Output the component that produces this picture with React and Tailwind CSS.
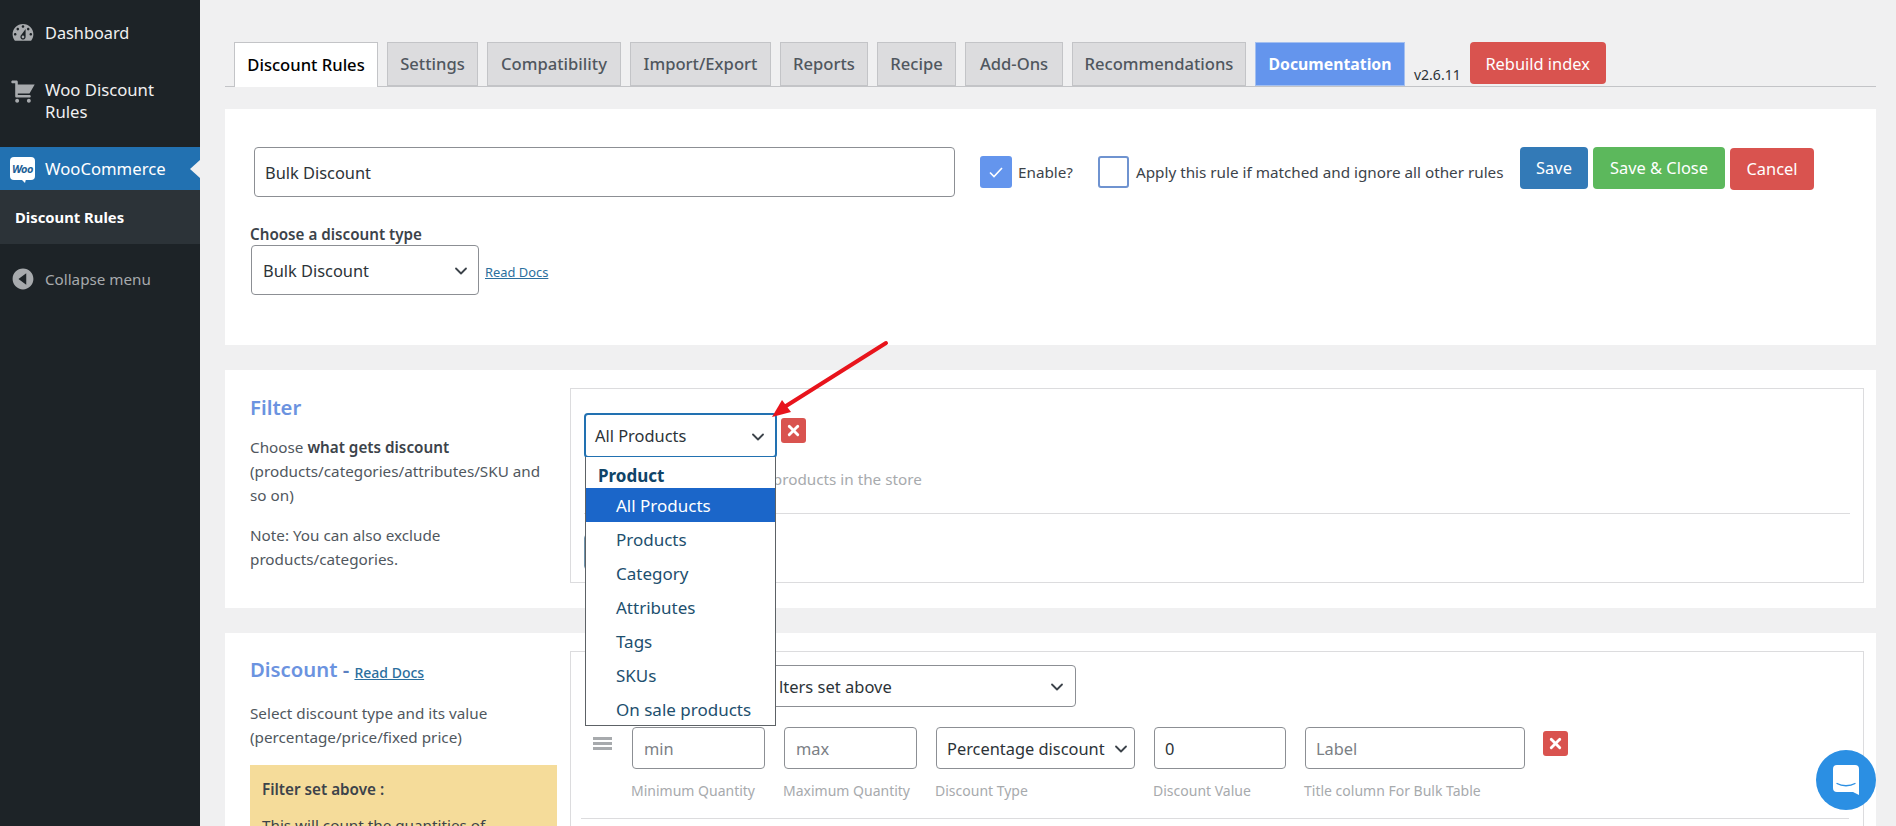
import { ChevronDown, X } from "lucide-react";

const FONT = "[font-family:'Noto_Sans',sans-serif]";

const TABS = [
  { label: "Settings", w: "w-[91px]" },
  { label: "Compatibility", w: "w-[134px]" },
  { label: "Import/Export", w: "w-[141px]" },
  { label: "Reports", w: "w-[88px]" },
  { label: "Recipe", w: "w-[79px]" },
  { label: "Add-Ons", w: "w-[98px]" },
  { label: "Recommendations", w: "w-[174px]" },
];

const OPTIONS = ["Products", "Category", "Attributes", "Tags", "SKUs", "On sale products"];

function DashIcon({ d, className }) {
  return (
    <svg viewBox="0 0 20 20" className={className} fill="currentColor">
      <path fillRule="evenodd" d={d} />
    </svg>
  );
}

function Sidebar() {
  return (
    <aside className="w-[200px] shrink-0 bg-[#1d2327] text-[#f0f0f1] text-[16.7px] leading-[22px]">
      <div className="flex items-center h-[65px]">
        <DashIcon
          className="w-[26px] h-[26px] ml-[10px] mr-[9px] text-[#a7aaad]"
          d="M3.76 16h12.48c1.1-1.37 1.76-3.11 1.76-5 0-4.42-3.58-8-8-8s-8 3.58-8 8c0 1.89.66 3.63 1.76 5zM10 4c.55 0 1 .45 1 1s-.45 1-1 1-1-.45-1-1 .45-1 1-1zM6 6c.55 0 1 .45 1 1s-.45 1-1 1-1-.45-1-1 .45-1 1-1zm8 0c.55 0 1 .45 1 1s-.45 1-1 1-1-.45-1-1 .45-1 1-1zm-5.37 5.55L12 7v6c0 1.1-.9 2-2 2s-2-.9-2-2c0-.57.24-1.08.63-1.45zM4 10c.55 0 1 .45 1 1s-.45 1-1 1-1-.45-1-1 .45-1 1-1zm12 0c.55 0 1 .45 1 1s-.45 1-1 1-1-.45-1-1 .45-1 1-1zm-5 3c0-.55-.45-1-1-1s-1 .45-1 1 .45 1 1 1 1-.45 1-1z"
        />
        <span className="text-[16.3px]">Dashboard</span>
      </div>
      <div className="flex h-[82px] pt-[13px]">
        <DashIcon
          className="w-[26px] h-[26px] ml-[10px] mr-[9px] text-[#a7aaad]"
          d="M6 13h9c.55 0 1 .45 1 1s-.45 1-1 1H5c-.55 0-1-.45-1-1V4H2c-.55 0-1-.45-1-1s.45-1 1-1h3c.55 0 1 .45 1 1v2h13l-4 7H6v1zm-.5 3c.83 0 1.5.67 1.5 1.5S6.33 19 5.5 19 4 18.33 4 17.5 4.67 16 5.5 16zm9 0c.83 0 1.5.67 1.5 1.5s-.67 1.5-1.5 1.5-1.5-.67-1.5-1.5.67-1.5 1.5-1.5z"
        />
        <span className="pt-[1px]">Woo Discount<br />Rules</span>
      </div>
      <div className="relative flex items-center h-[43px] bg-[#2271b1] text-white">
        <div className="relative ml-[10px] mr-[10px] w-[25px] h-[23px] rounded-[4px] bg-white flex items-center justify-center">
          <span className="text-[11px] leading-none font-bold italic text-[#1f5f96] tracking-[-0.5px]">Woo</span>
          <span className="absolute -bottom-[3px] left-[11px] w-0 h-0 border-l-[4px] border-r-[1px] border-t-[4px] border-l-transparent border-r-transparent border-t-white" />
        </div>
        <span>WooCommerce</span>
        <span className="absolute right-0 top-[13px] w-0 h-0 border-y-[9px] border-r-[10px] border-y-transparent border-r-[#f0f0f1]" />
      </div>
      <div className="h-[54px] bg-[#2c3338] pl-[15px] pt-[16px] text-[14.8px] leading-[22px] font-bold text-white">
        Discount Rules
      </div>
      <div className="flex items-center h-[70px] text-[#a7aaad] text-[15.2px]">
        <DashIcon
          className="w-[26px] h-[26px] ml-[10px] mr-[9px] text-[#a7aaad]"
          d="M10 2c4.42 0 8 3.58 8 8s-3.58 8-8 8-8-3.58-8-8 3.58-8 8-8zm2.5 3.5L6.5 10l6 4.5v-9z"
        />
        <span>Collapse menu</span>
      </div>
    </aside>
  );
}

function Field({ children, className = "" }) {
  return (
    <div className={`flex items-center pt-[2px] rounded-[4px] border border-[#8c8f94] bg-white text-[#2c3338] ${className}`}>
      {children}
    </div>
  );
}

function Chevron() {
  return <ChevronDown className="w-[20px] h-[20px] text-[#3c434a]" strokeWidth={2.2} />;
}

function RedX({ className = "" }) {
  return (
    <div className={`w-[25px] h-[25px] rounded-[3px] bg-[#d9534f] flex items-center justify-center text-white ${className}`}>
      <X className="w-[17px] h-[17px]" strokeWidth={4} />
    </div>
  );
}

function FilterMenu() {
  return (
    <div className="absolute left-[1px] top-[44px] w-[191px] h-[269px] z-10 bg-white border border-[#5d6266] border-t-0 text-[17px] text-[#1d4f6e]">
      <div className="h-[31px] pl-[12px] pt-[7px] font-bold leading-[24px] text-[#0f4468]">Product</div>
      <div className="h-[34px] pl-[30px] pt-[1px] flex items-center bg-[#1b66c9] text-white">All Products</div>
      {OPTIONS.map((o) => (
        <div key={o} className="h-[34px] pl-[30px] pt-[1px] flex items-center">{o}</div>
      ))}
    </div>
  );
}

function QtyCol({ label, width, children }) {
  return (
    <div className={`${width} shrink-0`}>
      {children}
      <div className="mt-[12px] -ml-[1px] text-[14px] leading-[20px] text-[#a7aaad] whitespace-nowrap">{label}</div>
    </div>
  );
}

export default function App() {
  return (
    <div className={`flex h-screen overflow-hidden bg-[#f0f0f1] ${FONT}`}>
      <Sidebar />
      <main className="relative flex-1 pl-[25px] pr-[20px] pt-[42px] min-w-0">
        {/* tabs */}
        <div className="flex items-start h-[45px] pl-[9px] gap-[9px] border-b border-[#c3c4c7] text-[16.6px] font-medium">
          <div className="w-[144px] h-[45px] pt-[1px] flex items-center justify-center bg-white border border-[#c3c4c7] border-b-0 text-black">
            Discount Rules
          </div>
          {TABS.map((t) => (
            <div key={t.label} className={`${t.w} h-[44px] pt-[1px] flex items-center justify-center bg-[#dcdcde] border border-[#c3c4c7] text-[#50575e]`}>
              {t.label}
            </div>
          ))}
          <div className="w-[150px] h-[44px] pt-[1px] flex items-center justify-center bg-[#6495ed] border border-[#a3bff0] text-white text-[15.8px] font-bold">
            Documentation
          </div>
          <span className="self-end mb-[1px] text-[14px] text-[#2c3338] font-normal">v2.6.11</span>
          <div className="w-[136px] h-[42px] pt-[2px] flex items-center justify-center rounded-[4px] bg-[#d9534f] text-white text-[16.4px] font-normal">
            Rebuild index
          </div>
        </div>

        {/* title card */}
        <section className="h-[236px] mt-[22px] bg-white pl-[29px] pt-[38px]">
          <div className="flex items-start">
            <Field className="w-[701px] h-[50px] pl-[10px] text-[16.4px] mr-[25px]">Bulk Discount</Field>
            <div className="flex items-center mt-[9px] text-[15.25px] text-[#3c434a]">
              <div className="w-[32px] h-[32px] rounded-[3px] bg-[#6495ed] flex items-center justify-center mr-[6px]">
                <svg viewBox="0 0 20 20" className="w-[20px] h-[20px]" fill="none" stroke="white" strokeWidth="1.6">
                  <path d="M4 10.5l4 4 8-8.5" />
                </svg>
              </div>
              <span className="w-[80px] pt-[1px]">Enable?</span>
              <div className="w-[31px] h-[32px] rounded-[3px] border-2 border-[#6f93d0] mr-[7px]" />
              <span className="whitespace-nowrap pt-[1px]">Apply this rule if matched and ignore all other rules</span>
            </div>
            <div className="ml-auto mr-[62px] flex items-start gap-[5px] text-[16.4px] text-white">
              <div className="w-[68px] h-[42px] pt-[1px] rounded-[4px] bg-[#337ab7] flex items-center justify-center">Save</div>
              <div className="w-[132px] h-[42px] pt-[1px] rounded-[4px] bg-[#5cb85c] flex items-center justify-center">Save &amp; Close</div>
              <div className="w-[84px] h-[42px] pt-[1px] mt-[1px] rounded-[4px] bg-[#d9534f] flex items-center justify-center">Cancel</div>
            </div>
          </div>
          <div className="mt-[26px] -ml-[4px] text-[15.2px] leading-[22px] font-semibold text-[#3c434a]">Choose a discount type</div>
          <div className="flex items-center -ml-[3px]">
            <Field className="w-[228px] h-[50px] pl-[11px] pr-[7px] justify-between text-[16.4px]">
              Bulk Discount
              <Chevron />
            </Field>
            <a className="ml-[6px] mt-[5px] text-[12.9px] underline text-[#2b6f9e]">Read Docs</a>
          </div>
        </section>

        {/* filter card */}
        <section className="flex h-[238px] mt-[25px] bg-white">
          <div className="w-[345px] shrink-0 pl-[25px] pr-[10px] pt-[21px] text-[15.25px] leading-[24px] text-[#50575e]">
            <h2 className="text-[20.3px] leading-[32px] font-semibold text-[#6b93e0] mb-[12px]">Filter</h2>
            <p>Choose <b className="font-semibold text-[#3c434a]">what gets discount</b><br />(products/categories/attributes/SKU and so on)</p>
            <p className="mt-[16px]">Note: You can also exclude products/categories.</p>
          </div>
          <div className="relative w-[1294px] h-[195px] mt-[18px] border border-[#dcdcde] px-[13px]">
            <div className="relative flex items-start mt-[24px]">
              <div className="w-[193px] h-[45px] pl-[9px] pr-[7px] pt-[2px] flex items-center justify-between rounded-[4px] border-2 border-[#2271b1] bg-white text-[16.4px] text-[#2c3338]">
                All Products
                <Chevron />
              </div>
              <RedX className="ml-[4px] mt-[5px]" />
              <FilterMenu />
            </div>
            <p className="mt-[10px] text-[15.25px] text-[#a7aaad]">Discount applies to all the products in the store</p>
            <div className="mt-[22px] border-t border-[#dcdcde]" />
            <div className="mt-[20px] w-[120px] h-[36px] rounded-[4px] border border-[#6f94ad]" />
          </div>
        </section>

        {/* discount card */}
        <section className="relative flex h-[300px] mt-[25px] bg-white">
          <div className="w-[345px] shrink-0 pl-[25px] pr-[0px] pt-[20px] text-[15.25px] leading-[24.3px] text-[#50575e]">
            <h2 className="text-[20.3px] leading-[32px] font-semibold text-[#6b93e0] mb-[13px]">
              Discount <span className="text-[#5b7fc0]">-</span>{" "}
              <a className="relative top-[1px] text-[14px] font-medium underline text-[#2b6f9e]">Read Docs</a>
            </h2>
            <p>Select discount type and its value<br />(percentage/price/fixed price)</p>
            <div className="mt-[15px] w-[307px] h-[200px] bg-[#f5dc9a] px-[12px] pt-[12px] text-[#3c434a]">
              <b className="font-semibold">Filter set above :</b>
              <p className="mt-[12px]">This will count the quantities of</p>
            </div>
          </div>
          <div className="w-[1294px] h-[300px] mt-[18px] border border-[#dcdcde] pl-[10px] pt-[13px]">
            <Field className="ml-[30px] w-[465px] h-[42px] pr-[8px] justify-between text-[16.5px]">
              <span className="pl-[167px]">lters set above</span>
              <Chevron />
            </Field>
            <div className="flex items-start mt-[20px]">
              <div className="w-[51px] shrink-0 pl-[12px] pt-[10px]">
                <div className="w-[19px] h-[13px] border-y-[3px] border-[#a7aaad] relative">
                  <div className="absolute top-[2px] left-0 right-0 h-[3px] bg-[#a7aaad]" />
                </div>
              </div>
              <div className="flex gap-[19px] text-[16.4px]">
                <QtyCol label="Minimum Quantity" width="w-[133px]">
                  <Field className="h-[42px] pl-[11px] text-[#7b8085]">min</Field>
                </QtyCol>
                <QtyCol label="Maximum Quantity" width="w-[133px]">
                  <Field className="h-[42px] pl-[11px] text-[#7b8085]">max</Field>
                </QtyCol>
                <QtyCol label="Discount Type" width="w-[199px]">
                  <Field className="h-[42px] pl-[10px] pr-[3px] justify-between whitespace-nowrap">
                    Percentage discount
                    <Chevron />
                  </Field>
                </QtyCol>
                <QtyCol label="Discount Value" width="w-[132px]">
                  <Field className="h-[42px] pl-[10px]">0</Field>
                </QtyCol>
                <QtyCol label="Title column For Bulk Table" width="w-[220px]">
                  <Field className="h-[42px] pl-[10px] text-[#7b8085]">Label</Field>
                </QtyCol>
              </div>
              <RedX className="ml-[18px] mt-[4px]" />
            </div>
            <div className="mt-[17px] mr-[14px] border-t border-[#dcdcde]" />
          </div>
        </section>

        {/* annotation arrow */}
        <svg className="absolute left-[-200px] top-0 z-20 pointer-events-none" width="1896" height="826">
          <path d="M886 343L786 406" stroke="#e8141c" strokeWidth="4" strokeLinecap="round" />
          <path d="M772 417L782 400L791 412Z" fill="#e8141c" />
        </svg>

        {/* chat bubble */}
        <div className="absolute left-[1616px] top-[750px] z-20 w-[60px] h-[60px] rounded-full bg-[#2b8fe3] flex items-center justify-center">
          <svg viewBox="0 0 26 30" className="w-[26px] h-[30px]">
            <path fill="white" d="M4 0h18a4 4 0 014 4v26l-6-3H4a4 4 0 01-4-4V4a4 4 0 014-4z" />
            <path d="M4 18.5c5 3 13 3 18 0" fill="none" stroke="#2b8fe3" strokeWidth="1.3" strokeLinecap="round" />
          </svg>
        </div>
      </main>
    </div>
  );
}
